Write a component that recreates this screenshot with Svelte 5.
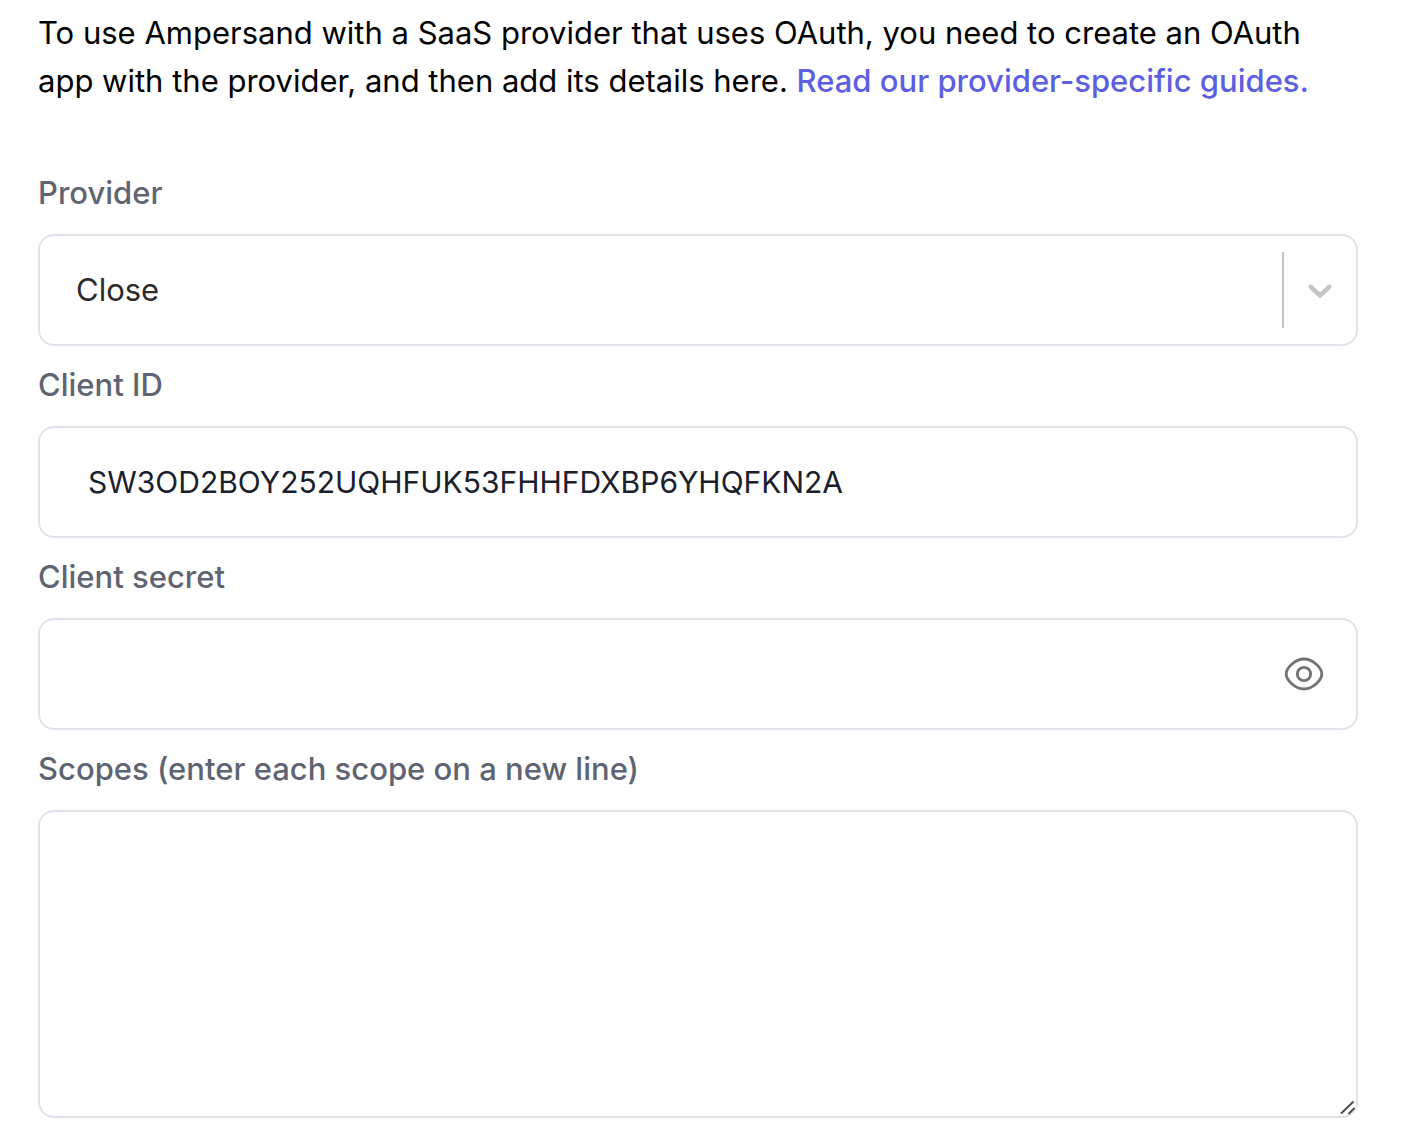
<script>
  let provider = $state('Close');
  let clientId = $state('SW3OD2BOY252UQHFUK53FHHFDXBP6YHQFKN2A');
  let secret = $state('');
  let scopes = $state('');
  let visible = $state(false);
</script>

<main>
  <p class="intro">
    To use Ampersand with a SaaS provider that uses OAuth, you need to create an OAuth app with the
    provider, and then add its details here. <a href="#guides">Read our provider-specific guides.</a>
  </p>

  <form>
    <div class="field">
      <label for="provider">Provider</label>
      <div class="control">
        <select id="provider" class="box" bind:value={provider}>
          <option>Close</option>
        </select>
        <span class="indicator">
          <svg width="40" height="40" viewBox="0 0 20 20" aria-hidden="true">
            <path
              fill="currentColor"
              d="M4.516 7.548c0.436-0.446 1.043-0.481 1.576 0l3.908 3.747 3.908-3.747c0.533-0.481 1.141-0.446 1.574 0 0.436 0.445 0.408 1.197 0 1.615-0.406 0.418-4.695 4.502-4.695 4.502-0.217 0.223-0.502 0.335-0.787 0.335s-0.57-0.112-0.789-0.335c0 0-4.287-4.084-4.695-4.502s-0.436-1.17 0-1.615z"
            />
          </svg>
        </span>
      </div>
    </div>

    <div class="field">
      <label for="client-id">Client ID</label>
      <input id="client-id" class="box" type="text" bind:value={clientId} />
    </div>

    <div class="field">
      <label for="client-secret">Client secret</label>
      <div class="control">
        <input
          id="client-secret"
          class="box secret"
          type={visible ? 'text' : 'password'}
          bind:value={secret}
        />
        <button
          class="eye"
          type="button"
          aria-label="Show client secret"
          onclick={() => (visible = !visible)}
        >
          <svg width="40" height="40" viewBox="0 0 40 40" fill="none" stroke="currentColor" stroke-width="2.8" aria-hidden="true">
            <path d="M20 5C29 5 37.8 14 37.8 20S29 35 20 35 2.200 26 2.200 20 11 5 20 5Z" />
            <circle cx="20" cy="20" r="6.700" />
          </svg>
        </button>
      </div>
    </div>

    <div class="field">
      <label for="scopes">Scopes (enter each scope on a new line)</label>
      <div class="control">
        <textarea id="scopes" class="box" bind:value={scopes}></textarea>
        <svg class="grip" width="16" height="16" viewBox="0 0 16 16" fill="none" stroke="currentColor" stroke-width="1.9" aria-hidden="true">
          <path d="M1 13.500 13.500 1.500M8.500 14 14.500 8" />
        </svg>
      </div>
    </div>
  </form>
</main>

<style>
  :global(body) {
    margin: 0;
    background: #fff;
  }

  main {
    padding: 9px 46px 28px 38px;
    font-family: Inter, 'Liberation Sans', sans-serif;
    font-size: 31px;
    line-height: 48px;
    color: #000;
  }

  .intro {
    margin: 0 0 65px;
  }

  a {
    color: #5b5fe0;
    font-weight: 500;
    text-decoration: none;
  }

  form {
    display: flex;
    flex-direction: column;
    gap: 16px;
  }

  .field {
    display: flex;
    flex-direction: column;
    gap: 18px;
  }

  label {
    line-height: 46px;
    color: #5f6472;
    font-weight: 500;
  }

  .control {
    position: relative;
    display: flex;
  }

  .box {
    box-sizing: border-box;
    width: 100%;
    height: 112px;
    margin: 0;
    padding: 0 48px;
    border: 2px solid #e0e2ed;
    border-radius: 16px;
    background: #fff;
    font: inherit;
    font-size: 30px;
    color: #1a202c;
    outline: none;
  }

  select.box {
    appearance: none;
    padding: 0 112px 0 36px;
    font-size: 31px;
    color: #2b2b2b;
  }

  .secret {
    padding-right: 96px;
  }

  textarea.box {
    display: block;
    height: 308px;
    padding: 32px 48px;
    resize: none;
  }

  .indicator {
    position: absolute;
    top: 18px;
    right: 2px;
    bottom: 18px;
    display: flex;
    align-items: center;
    padding: 0 16px;
    border-left: 2px solid #c4c4c4;
    color: #c4c4c4;
    pointer-events: none;
  }

  .eye {
    position: absolute;
    top: 0;
    right: 34px;
    bottom: 0;
    display: flex;
    align-items: center;
    padding: 0;
    border: 0;
    background: none;
    color: #737373;
    cursor: pointer;
  }

  .grip {
    position: absolute;
    right: 2px;
    bottom: 2px;
    color: #4a4a4a;
    pointer-events: none;
  }
</style>
